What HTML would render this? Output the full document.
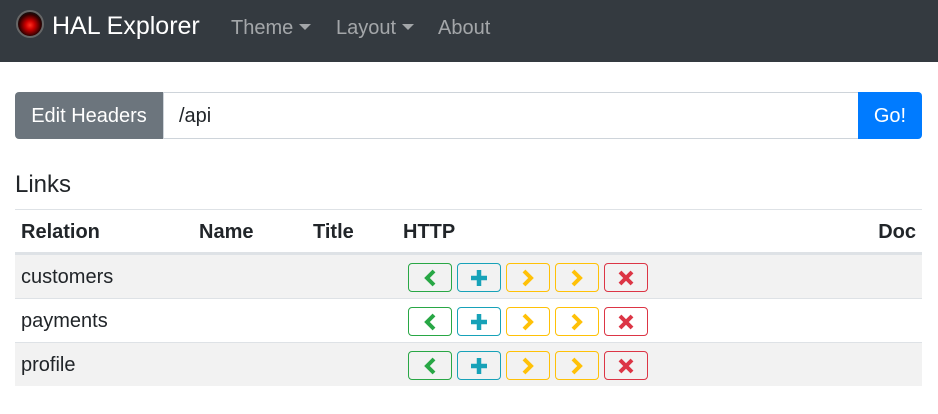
<!DOCTYPE html>
<html><head><style>
*{box-sizing:border-box}
body{margin:0;width:938px;height:414px;background:#fff;font-family:"Liberation Sans",sans-serif;color:#212529;overflow:hidden;position:relative}
.nav{position:absolute;left:0;top:0;width:938px;height:62px;background:#343a40}
.logo{position:absolute;left:16px;top:10px;width:28px;height:28px;border-radius:50%;background:radial-gradient(circle at 50% 55%,#ff3020 0,#c00 25%,#300 60%,#111 75%);border:2px solid #666}
.brand{position:absolute;left:52px;top:12px;font-size:25px;color:#fff}
.ni{position:absolute;top:17px;font-size:20px;color:rgba(255,255,255,.55)}
.car{display:inline-block;width:0;height:0;border-left:6px solid transparent;border-right:6px solid transparent;border-top:6px solid rgba(255,255,255,.55);vertical-align:4px;margin-left:6px}
.eh{position:absolute;left:15px;top:92px;width:148px;height:47px;background:#6c757d;color:#fff;font-size:20px;line-height:48px;text-align:center;border-radius:4px 0 0 4px}
.inp{position:absolute;left:163px;top:92px;width:696px;height:47px;border:1px solid #ced4da;font-size:20px;line-height:46px;padding-left:15px}
.go{position:absolute;left:858px;top:92px;width:64px;height:47px;background:#007bff;color:#fff;font-size:20px;line-height:48px;text-align:center;border-radius:0 4px 4px 0}
h3{position:absolute;left:15px;top:171px;margin:0;font-size:24px;font-weight:400}
.t{position:absolute;left:15px;top:209px;width:907px;border-top:1px solid #dee2e6}
.hd{height:44px;border-bottom:2px solid #dee2e6;position:relative;font-weight:bold;font-size:20px}
.r{height:44px;border-top:1px solid #dee2e6;position:relative;font-size:20px}
.s{background:#f2f2f2}
.c{position:absolute;top:11px}
.b{position:absolute;top:8px;width:44px;height:29px;border:1px solid;border-radius:4px;display:flex;align-items:center;justify-content:center}
</style></head><body>
<div class="nav"><div class="logo"></div><div class="brand">HAL Explorer</div>
<div class="ni" style="left:231px">Theme<span class="car"></span></div>
<div class="ni" style="left:336px">Layout<span class="car"></span></div>
<div class="ni" style="left:438px">About</div></div>
<div class="eh">Edit Headers</div><div class="inp">/api</div><div class="go">Go!</div>
<h3>Links</h3>
<div class="t"></div>
<script>
var btns='<div class="b" style="left:393px;border-color:#28a745"><svg width="16" height="18"><path d="M12 2L5 9l7 7" stroke="#28a745" stroke-width="4" fill="none"/></svg></div>'+
'<div class="b" style="left:442px;border-color:#17a2b8"><svg width="18" height="18"><path d="M9 1v16M1 9h16" stroke="#17a2b8" stroke-width="4.5"/></svg></div>'+
'<div class="b" style="left:491px;border-color:#ffc107"><svg width="16" height="18"><path d="M4 2l7 7-7 7" stroke="#ffc107" stroke-width="4" fill="none"/></svg></div>'+
'<div class="b" style="left:540px;border-color:#ffc107"><svg width="16" height="18"><path d="M4 2l7 7-7 7" stroke="#ffc107" stroke-width="4" fill="none"/></svg></div>'+
'<div class="b" style="left:589px;border-color:#dc3545"><svg width="16" height="16"><path d="M2 2l12 12M14 2L2 14" stroke="#dc3545" stroke-width="4"/></svg></div>';
var t=document.querySelector('.t');
var h='<div class="hd"><span class="c" style="left:6px">Relation</span><span class="c" style="left:184px">Name</span><span class="c" style="left:298px">Title</span><span class="c" style="left:388px">HTTP</span><span class="c" style="right:6px">Doc</span></div>';
['customers','payments','profile'].forEach(function(n,i){h+='<div class="r'+(i%2==0?' s':'')+'"><span class="c" style="left:6px">'+n+'</span>'+btns+'</div>';});
t.innerHTML=h;
</script>
</body></html>
